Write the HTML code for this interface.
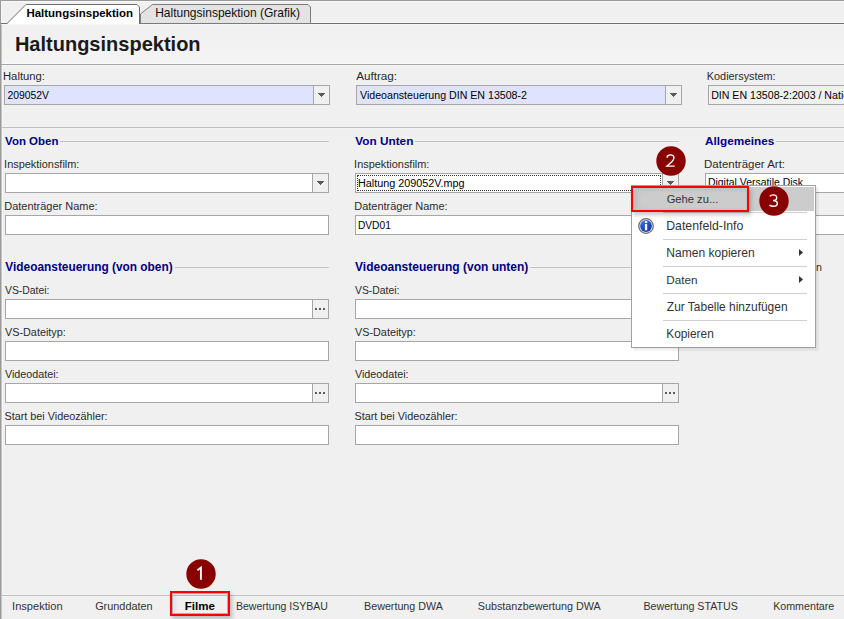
<!DOCTYPE html>
<html><head><meta charset="utf-8">
<style>
*{margin:0;padding:0;box-sizing:border-box}
html,body{width:844px;height:619px;overflow:hidden;background:#f0f0f0;font-family:"Liberation Sans",sans-serif;position:relative}
.a{position:absolute}
.t{position:absolute;white-space:pre;line-height:1}
.hl{position:absolute;height:1px;background:#c0c0c0;box-shadow:0 1px 0 #f3f3f3,0 -1px 0 #f3f3f3}
.inp{position:absolute;height:20px;border:1px solid #a6a6a6;background:#fff}
.btn{position:absolute;top:0;right:0;width:16px;height:18px;border-left:1px solid #a6a6a6;background:#f0f0f0}
.tri{position:absolute;left:4px;top:7px;width:7px;height:4px;background:linear-gradient(#5a5a5a,#5a5a5a) 0 0/7px 1px no-repeat,linear-gradient(#5a5a5a,#5a5a5a) 1px 1px/5px 1px no-repeat,linear-gradient(#5a5a5a,#5a5a5a) 2px 2px/3px 1px no-repeat,linear-gradient(#5a5a5a,#5a5a5a) 3px 3px/1px 1px no-repeat}
.dots{position:absolute;left:2px;top:8px;width:10px;height:2px;background:linear-gradient(90deg,#5a5a5a 0 2px,transparent 2px 4px,#5a5a5a 4px 6px,transparent 6px 8px,#5a5a5a 8px 10px)}
.msep{position:absolute;height:1px;background:#d0d0d0}
.circ{position:absolute;width:30px;height:30px;border-radius:50%;background:#800000}
</style></head><body>
<div class="a" style="left:0;top:0;width:844px;height:1px;background:#9a9a9a"></div>
<div class="a" style="left:0;top:0;width:1px;height:619px;background:#9a9a9a"></div>
<div class="a" style="left:1px;top:1px;width:843px;height:1px;background:#f8f8f8"></div>
<div class="a" style="left:1px;top:1px;width:1px;height:23px;background:#f8f8f8"></div>
<div class="a" style="left:1px;top:24px;width:1px;height:595px;background:#c4c4c4"></div>
<div class="a" style="left:2px;top:24px;width:1px;height:571px;background:#f6f6f6"></div>
<svg class="a" style="left:0;top:0" width="844" height="30">
 <rect x="1" y="22" width="843" height="1" fill="#f8f8f8"/><rect x="1" y="24" width="843" height="1" fill="#f6f6f6"/><line x1="1" y1="23.5" x2="844" y2="23.5" stroke="#6e6e6e" stroke-width="1"/>
 <polygon points="140.5,23.5 140.5,14 152.5,4.5 308,4.5 310.5,7 310.5,23.5" fill="#e3e3e3" stroke="#7a7a7a" stroke-width="1"/>
 <polygon points="7,24 26,4.5 137,4.5 139.5,7 139.5,24" fill="#fff" stroke="none"/>
 <polyline points="1,23.5 7,23.5 26,4.5 137,4.5 139.5,7 139.5,24" fill="none" stroke="#6e6e6e" stroke-width="1"/>
</svg>
<div class="t" style="left:26.41px;top:8.27px;font-size:11.49px;font-weight:bold;color:#000;">Haltungsinspektion</div>
<div class="t" style="left:155.14px;top:6.81px;font-size:12.03px;color:#111;">Haltungsinspektion (Grafik)</div>
<div class="a" style="left:2px;top:25px;width:842px;height:38px;background:linear-gradient(#f0f0f0,#f4f4f4)"></div>
<div class="a" style="left:2px;top:63px;width:842px;height:1px;background:#fafafa"></div>
<div class="a" style="left:1px;top:64px;width:843px;height:1px;background:#a6a6a6"></div>
<div class="a" style="left:2px;top:65px;width:842px;height:1px;background:#f4f4f4"></div>
<div class="t" style="left:14.89px;top:34.05px;font-size:20.02px;font-weight:bold;color:#1a1a1a;">Haltungsinspektion</div>
<div class="t" style="left:3.00px;top:71.47px;font-size:11.25px;color:#2a2a2a;">Haltung:</div>
<div class="inp" style="left:4px;top:85px;width:326px;background:#dfe3fe"><div class="btn"><div class="tri"></div></div></div>
<div class="t" style="left:7.48px;top:91.23px;font-size:10.36px;color:#000;">209052V</div>
<div class="t" style="left:356.20px;top:70.13px;font-size:11.66px;color:#2a2a2a;">Auftrag:</div>
<div class="inp" style="left:356px;top:85px;width:326px;background:#dfe3fe"><div class="btn"><div class="tri"></div></div></div>
<div class="t" style="left:360.00px;top:89.99px;font-size:10.64px;color:#000;">Videoansteuerung DIN EN 13508-2</div>
<div class="t" style="left:706.83px;top:70.80px;font-size:10.86px;color:#2a2a2a;">Kodiersystem:</div>
<div class="inp" style="left:708px;top:85px;width:200px;background:#f0f0f0"></div>
<div class="t" style="left:711.15px;top:90.02px;font-size:10.61px;color:#000;">DIN EN 13508-2:2003 / National</div>
<div class="a" style="left:2px;top:126px;width:842px;height:1px;background:#f3f3f3"></div>
<div class="a" style="left:1px;top:127px;width:843px;height:1px;background:#c0c0c0"></div>
<div class="a" style="left:2px;top:128px;width:842px;height:1px;background:#f3f3f3"></div>
<div class="t" style="left:5.10px;top:136.29px;font-size:11.47px;font-weight:bold;color:#000080;">Von Oben</div>
<div class="hl" style="left:60px;top:141px;width:269px"></div>
<div class="t" style="left:4.12px;top:158.75px;font-size:10.93px;color:#2a2a2a;">Inspektionsfilm:</div>
<div class="inp" style="left:5px;top:173px;width:324px;background:#fff"><div class="btn"><div class="tri"></div></div></div>
<div class="t" style="left:4.22px;top:200.69px;font-size:10.99px;color:#2a2a2a;">Datenträger Name:</div>
<div class="inp" style="left:5px;top:215px;width:324px;background:#fff"></div>
<div class="t" style="left:5.30px;top:261.93px;font-size:11.89px;font-weight:bold;color:#000080;">Videoansteuerung (von oben)</div>
<div class="hl" style="left:175px;top:267px;width:154px"></div>
<div class="t" style="left:5.00px;top:286.19px;font-size:10.4px;color:#2a2a2a;">VS-Datei:</div>
<div class="inp" style="left:5px;top:299px;width:324px;background:#fff"><div class="btn"><div class="dots"></div></div></div>
<div class="t" style="left:5.00px;top:326.82px;font-size:10.84px;color:#2a2a2a;">VS-Dateityp:</div>
<div class="inp" style="left:5px;top:341px;width:324px;background:#fff"></div>
<div class="t" style="left:5.00px;top:368.91px;font-size:10.74px;color:#2a2a2a;">Videodatei:</div>
<div class="inp" style="left:5px;top:383px;width:324px;background:#fff"><div class="btn"><div class="dots"></div></div></div>
<div class="t" style="left:4.57px;top:410.86px;font-size:10.8px;color:#2a2a2a;">Start bei Videozähler:</div>
<div class="inp" style="left:5px;top:425px;width:324px;background:#fff"></div>
<div class="t" style="left:355.20px;top:135.99px;font-size:11.82px;font-weight:bold;color:#000080;">Von Unten</div>
<div class="hl" style="left:415px;top:141px;width:264px"></div>
<div class="t" style="left:354.12px;top:158.75px;font-size:10.93px;color:#2a2a2a;">Inspektionsfilm:</div>
<div class="inp" style="left:355px;top:173px;width:324px;background:#fff"><div class="btn"><div class="tri"></div></div></div>
<div class="a" style="left:357px;top:175px;width:304px;height:16px;border:1px dotted #333"></div>
<div class="t" style="left:357.93px;top:177.84px;font-size:10.82px;color:#000;">Haltung 209052V.mpg</div>
<div class="t" style="left:354.22px;top:200.69px;font-size:10.99px;color:#2a2a2a;">Datenträger Name:</div>
<div class="inp" style="left:355px;top:215px;width:324px;background:#fff"></div>
<div class="t" style="left:357.98px;top:221.36px;font-size:10.2px;color:#000;">DVD01</div>
<div class="t" style="left:355.00px;top:260.82px;font-size:12.02px;font-weight:bold;color:#000080;">Videoansteuerung (von unten)</div>
<div class="hl" style="left:530px;top:267px;width:149px"></div>
<div class="t" style="left:355.00px;top:286.19px;font-size:10.4px;color:#2a2a2a;">VS-Datei:</div>
<div class="inp" style="left:355px;top:299px;width:324px;background:#fff"><div class="btn"><div class="dots"></div></div></div>
<div class="t" style="left:355.00px;top:326.82px;font-size:10.84px;color:#2a2a2a;">VS-Dateityp:</div>
<div class="inp" style="left:355px;top:341px;width:324px;background:#fff"></div>
<div class="t" style="left:355.00px;top:368.91px;font-size:10.74px;color:#2a2a2a;">Videodatei:</div>
<div class="inp" style="left:355px;top:383px;width:324px;background:#fff"><div class="btn"><div class="dots"></div></div></div>
<div class="t" style="left:354.57px;top:410.86px;font-size:10.8px;color:#2a2a2a;">Start bei Videozähler:</div>
<div class="inp" style="left:355px;top:425px;width:324px;background:#fff"></div>
<div class="t" style="left:705.06px;top:135.03px;font-size:11.77px;font-weight:bold;color:#000080;">Allgemeines</div>
<div class="hl" style="left:776px;top:141px;width:68px"></div>
<div class="t" style="left:704.08px;top:159.29px;font-size:11.47px;color:#2a2a2a;">Datenträger Art:</div>
<div class="inp" style="left:705px;top:173px;width:200px;background:#fff"></div>
<div class="t" style="left:707.97px;top:178.17px;font-size:10.43px;color:#000;">Digital Versatile Disk</div>
<div class="inp" style="left:705px;top:215px;width:200px;background:#fff"></div>
<div class="a" style="left:2px;top:594px;width:842px;height:1px;background:#f3f3f3"></div><div class="a" style="left:2px;top:596px;width:842px;height:1px;background:#f3f3f3"></div><div class="a" style="left:2px;top:595px;width:842px;height:1px;background:#c0c0c0"></div>
<div class="t" style="left:12.10px;top:600.62px;font-size:11.08px;color:#333;">Inspektion</div>
<div class="t" style="left:95.16px;top:600.79px;font-size:10.88px;color:#333;">Grunddaten</div>
<div class="t" style="left:235.96px;top:601.07px;font-size:10.55px;color:#333;">Bewertung ISYBAU</div>
<div class="t" style="left:364.04px;top:600.91px;font-size:10.73px;color:#333;">Bewertung DWA</div>
<div class="t" style="left:477.77px;top:600.86px;font-size:10.79px;color:#333;">Substanzbewertung DWA</div>
<div class="t" style="left:643.45px;top:600.97px;font-size:10.67px;color:#333;">Bewertung STATUS</div>
<div class="t" style="left:773.14px;top:600.94px;font-size:10.7px;color:#333;">Kommentare</div>
<div class="t" style="left:184.81px;top:601.21px;font-size:11.56px;font-weight:bold;color:#000;">Filme</div>
<div class="a" style="left:633px;top:187px;width:186px;height:164px;background:rgba(0,0,0,0.05);border-radius:2px"></div>
<div class="a" style="left:632px;top:186px;width:185px;height:163px;background:rgba(0,0,0,0.04);border-radius:2px"></div>
<div class="t" style="left:815.9px;top:261.94px;font-size:10.7px;color:#2a2a2a">n</div>
<div class="a" style="left:631px;top:185px;width:185px;height:163px;background:#fff;border:1px solid #a0a0a0"></div>
<div class="a" style="left:633px;top:187px;width:181px;height:24px;background:#cccccc"></div>
<div class="t" style="left:666.64px;top:193.53px;font-size:11.19px;color:#333333;">Gehe zu...</div>
<div class="t" style="left:666.22px;top:219.59px;font-size:12.29px;color:#333333;">Datenfeld-Info</div>
<div class="t" style="left:666.23px;top:246.78px;font-size:12.07px;color:#333333;">Namen kopieren</div>
<div class="t" style="left:666.26px;top:274.07px;font-size:11.73px;color:#333333;">Daten</div>
<div class="t" style="left:666.84px;top:301.87px;font-size:11.96px;color:#333333;">Zur Tabelle hinzufügen</div>
<div class="t" style="left:666.25px;top:328.95px;font-size:11.87px;color:#333333;">Kopieren</div>
<div class="msep" style="left:663px;top:212px;width:144px"></div>
<div class="msep" style="left:663px;top:239px;width:144px"></div>
<div class="msep" style="left:663px;top:266px;width:144px"></div>
<div class="msep" style="left:663px;top:293px;width:144px"></div>
<div class="msep" style="left:663px;top:320px;width:144px"></div>
<svg class="a" style="left:799px;top:249px" width="5" height="8"><polygon points="0,0 4,3.5 0,7" fill="#333"/></svg>
<svg class="a" style="left:799px;top:276px" width="5" height="8"><polygon points="0,0 4,3.5 0,7" fill="#333"/></svg>
<svg class="a" style="left:638px;top:218px" width="16" height="16">
<defs><linearGradient id="ig" x1="0" y1="0" x2="0.6" y2="1"><stop offset="0" stop-color="#5a8af0"/><stop offset="0.5" stop-color="#2050d0"/><stop offset="1" stop-color="#1a3aa8"/></linearGradient></defs>
<circle cx="8" cy="8" r="7.3" fill="#eef" stroke="#6e6e6e" stroke-width="1.3"/>
<circle cx="8" cy="8" r="5.9" fill="url(#ig)"/>
<rect x="6.9" y="3" width="2.3" height="2.1" fill="#fff"/>
<rect x="6.9" y="6.1" width="2.3" height="6.2" fill="#fff"/>
</svg>
<div class="a" style="left:631px;top:186px;width:118px;height:26px;border:2px solid #fa0000;box-shadow:2px 3px 4px rgba(0,0,0,0.22)"></div>
<div class="a" style="left:633px;top:188px;width:114px;height:22px;border:1px solid #b8c8c8;box-shadow:inset 4px 1px 4px rgba(0,0,0,0.07)"></div>
<div class="a" style="left:172px;top:593px;width:56px;height:21px;border:1px solid #a8b4b4;box-shadow:inset 3px 1px 3px rgba(0,0,0,0.06)"></div>
<div class="a" style="left:170px;top:591px;width:60px;height:25px;border:2px solid #fa0000;box-shadow:2px 3px 4px rgba(0,0,0,0.22)"></div>
<svg class="a" style="left:185.60px;top:558.50px" width="30" height="30"><circle cx="15" cy="15" r="14.7" fill="#880000"/><path d="M11.4,11.2 L14.9,8.6 L14.9,20.7" fill="none" stroke="#fff" stroke-width="1.9" stroke-linejoin="miter"/></svg>
<svg class="a" style="left:655.60px;top:145.50px" width="30" height="30"><circle cx="15" cy="15" r="14.7" fill="#880000"/><path d="M11,11.6 C11.2,9.8 12.6,8.9 14.5,8.9 C16.6,8.9 17.9,10.1 17.9,11.9 C17.9,13.4 17,14.5 15.6,15.9 L10.9,20.1 L18.7,20.1" fill="none" stroke="#fff" stroke-width="1.4"/></svg>
<svg class="a" style="left:758.60px;top:185.50px" width="30" height="30"><circle cx="15" cy="15" r="14.7" fill="#880000"/><path d="M10.8,10.2 C11.5,9.3 12.7,8.9 14.2,8.9 C16.3,8.9 17.7,10 17.7,11.7 C17.7,13.4 16.3,14.5 14,14.5 C16.6,14.5 18.3,15.6 18.3,17.5 C18.3,19.4 16.6,20.3 14.2,20.3 C12.6,20.3 11.3,19.8 10.5,19" fill="none" stroke="#fff" stroke-width="1.4"/></svg>
</body></html>
